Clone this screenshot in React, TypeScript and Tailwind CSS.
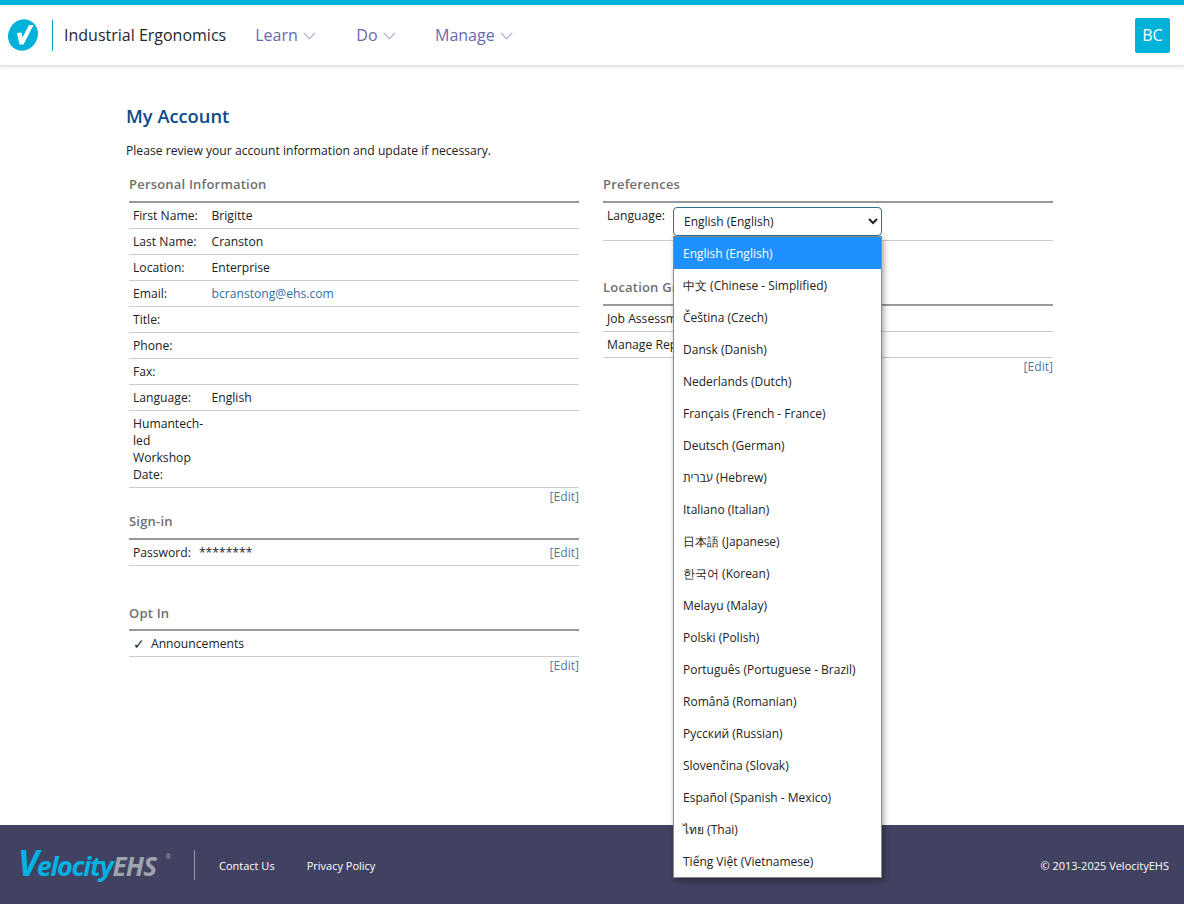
const languages = [
  "English (English)",
  "中文 (Chinese - Simplified)",
  "Čeština (Czech)",
  "Dansk (Danish)",
  "Nederlands (Dutch)",
  "Français (French - France)",
  "Deutsch (German)",
  "עברית (Hebrew)",
  "Italiano (Italian)",
  "日本語 (Japanese)",
  "한국어 (Korean)",
  "Melayu (Malay)",
  "Polski (Polish)",
  "Português (Portuguese - Brazil)",
  "Română (Romanian)",
  "Русский (Russian)",
  "Slovenčina (Slovak)",
  "Español (Spanish - Mexico)",
  "ไทย (Thai)",
  "Tiếng Việt (Vietnamese)",
];

function NavItem({ label, gap }: { label: string; gap: string }) {
  return (
    <div className={`flex items-center gap-[5.5px] ${gap}`}>
      <span className="text-[16px] text-[#6a69ad]">{label}</span>
      <svg width="13" height="8" viewBox="0 0 13 8" fill="none" stroke="#a9a8cf" strokeWidth="1.1" className="mt-[1px]">
        <path d="M0.7 0.9 L6.5 6.7 L12.3 0.9" />
      </svg>
    </div>
  );
}

function Row({ label, value, href }: { label: string; value?: string; href?: boolean }) {
  return (
    <div className="flex border-b border-[#cccccc] pt-[4px] pb-[4px] pl-[4px] leading-[17px]">
      <div className="mr-[6.5px] w-[72px] shrink-0">{label}</div>
      <div className={href ? "text-[#33709f]" : ""}>{value}</div>
    </div>
  );
}

function Heading({ children, className = "pb-[8px]" }: { children: string; className?: string }) {
  return (
    <div className={`border-b-[2px] border-[#999999] text-[13px] leading-[18px] font-semibold tracking-[0.2px] text-[#6f6f6f] ${className}`}>
      {children}
    </div>
  );
}

function Edit() {
  return <div className="text-right leading-[17px] text-[#4d7a9f]">[Edit]</div>;
}

export default function App() {
  return (
    <div className="flex min-h-[904px] flex-col bg-white font-['Open_Sans',sans-serif] text-[12.15px] text-[#222222]">
      <header className="relative z-10 flex h-[65px] items-center border-t-[5px] border-[#00b2d9] bg-white pr-[14px] pl-[7px] shadow-[0_1px_4px_rgba(0,0,0,0.2)]">
        <svg width="33" height="32" viewBox="0 0 33 32" className="shrink-0">
          <ellipse cx="16" cy="16" rx="14.6" ry="16" transform="rotate(30 16 16)" fill="#00b2d9" />
          <path d="M10 14 L14.5 13.5 L15.5 18.5 L22 6 L26.5 6 L16.5 25.5 L12.5 25.5 Z" fill="#ffffff" />
        </svg>
        <div className="mr-[11px] ml-[12px] h-[31px] w-px bg-[#00a0c6]" />
        <div className="mr-[29px] text-[16px] text-[#1d2733]">Industrial Ergonomics</div>
        <NavItem label="Learn" gap="mr-[40px]" />
        <NavItem label="Do" gap="mr-[39px]" />
        <NavItem label="Manage" gap="" />
        <div className="ml-auto flex h-[35px] w-[35px] items-center justify-center rounded-[2px] bg-[#00b2d9] text-[16px] text-white">
          BC
        </div>
      </header>

      <main className="flex-1 pt-[38px] pl-[126px]">
        <h1 className="text-[18.3px] leading-[25px] font-semibold text-[#0b4a8b]">My Account</h1>
        <p className="mt-[14px] leading-[18px]">Please review your account information and update if necessary.</p>

        <div className="mt-[15px] flex gap-[24px] pl-[3px]">
          <section className="w-[450px]">
            <Heading>Personal Information</Heading>
            <Row label="First Name:" value="Brigitte" />
            <Row label="Last Name:" value="Cranston" />
            <Row label="Location:" value="Enterprise" />
            <Row label="Email:" value="bcranstong@ehs.com" href />
            <Row label="Title:" />
            <Row label="Phone:" />
            <Row label="Fax:" />
            <Row label="Language:" value="English" />
            <Row label="Humantech-led Workshop Date:" />
            <Edit />

            <Heading className="mt-[7px] pb-[8px]">Sign-in</Heading>
            <div className="flex justify-between border-b border-[#cccccc] pt-[4px] pb-[4px] pl-[4px] leading-[17px]">
              <div>
                Password:<span className="ml-[8px]">********</span>
              </div>
              <div className="text-[#4d7a9f]">[Edit]</div>
            </div>

            <Heading className="mt-[38px] pb-[7px]">Opt In</Heading>
            <div className="flex border-b border-[#cccccc] pt-[4px] pb-[4px] pl-[4px] leading-[17px]">
              <span className="w-[18px] text-[14px]">✓</span>
              Announcements
            </div>
            <Edit />
          </section>

          <section className="relative w-[450px]">
            <Heading>Preferences</Heading>
            <div className="flex h-[38px] border-b border-[#cccccc] pt-[4px] pl-[4px] leading-[17px]">
              <div className="w-[66px] shrink-0">Language:</div>
              <select className="h-[29px] w-[209px] rounded-[4px] border border-[#2f6f94] bg-white pl-[6px] text-[12px] text-[#222222]">
                <option>English (English)</option>
              </select>
            </div>

            <Heading className="mt-[37px] pb-[8px]">Location Groups</Heading>
            <div className="border-b border-[#cccccc] pt-[4px] pb-[4px] pl-[4px] leading-[17px] whitespace-nowrap">Job Assessments</div>
            <div className="border-b border-[#cccccc] pt-[4px] pb-[4px] pl-[4px] leading-[17px] whitespace-nowrap">Manage Reports</div>
            <Edit />

            <ul className="absolute top-[61px] left-[70px] w-[209px] border border-[#8a8a8a] bg-white text-[12px] shadow-[2px_3px_6px_rgba(0,0,0,0.35)]">
              {languages.map((language, i) => (
                <li
                  key={language}
                  className={`flex h-[32px] items-center pt-[1px] pl-[9px] ${i === 0 ? "bg-[#1e90ff] text-white" : ""}`}
                >
                  {language}
                </li>
              ))}
            </ul>
          </section>
        </div>
      </main>

      <footer className="flex h-[79px] items-center bg-[#414261] pr-[15px] pl-[18px] text-[11px] text-white">
        <div className="relative flex w-[152px] items-baseline italic">
          <span className="text-[35px] leading-[30px] font-bold tracking-[-2px] text-[#00b2e3]">V</span>
          <span className="text-[27px] leading-[30px] font-bold tracking-[-1.3px] text-[#00b2e3]">elocity</span>
          <span className="text-[26px] leading-[30px] font-bold tracking-[-0.8px] text-[#9ea3ad]">EHS</span>
          <span className="absolute top-[4px] right-[-1px] text-[7px] text-[#9ea3ad]">®</span>
        </div>
        <div className="mr-[24px] ml-[24px] h-[30px] w-px bg-[#9a9bae]" />
        <a className="mt-[3px] mr-[32px]">Contact Us</a>
        <a className="mt-[3px]">Privacy Policy</a>
        <div className="mt-[3px] ml-auto">© 2013-2025 VelocityEHS</div>
      </footer>
    </div>
  );
}
